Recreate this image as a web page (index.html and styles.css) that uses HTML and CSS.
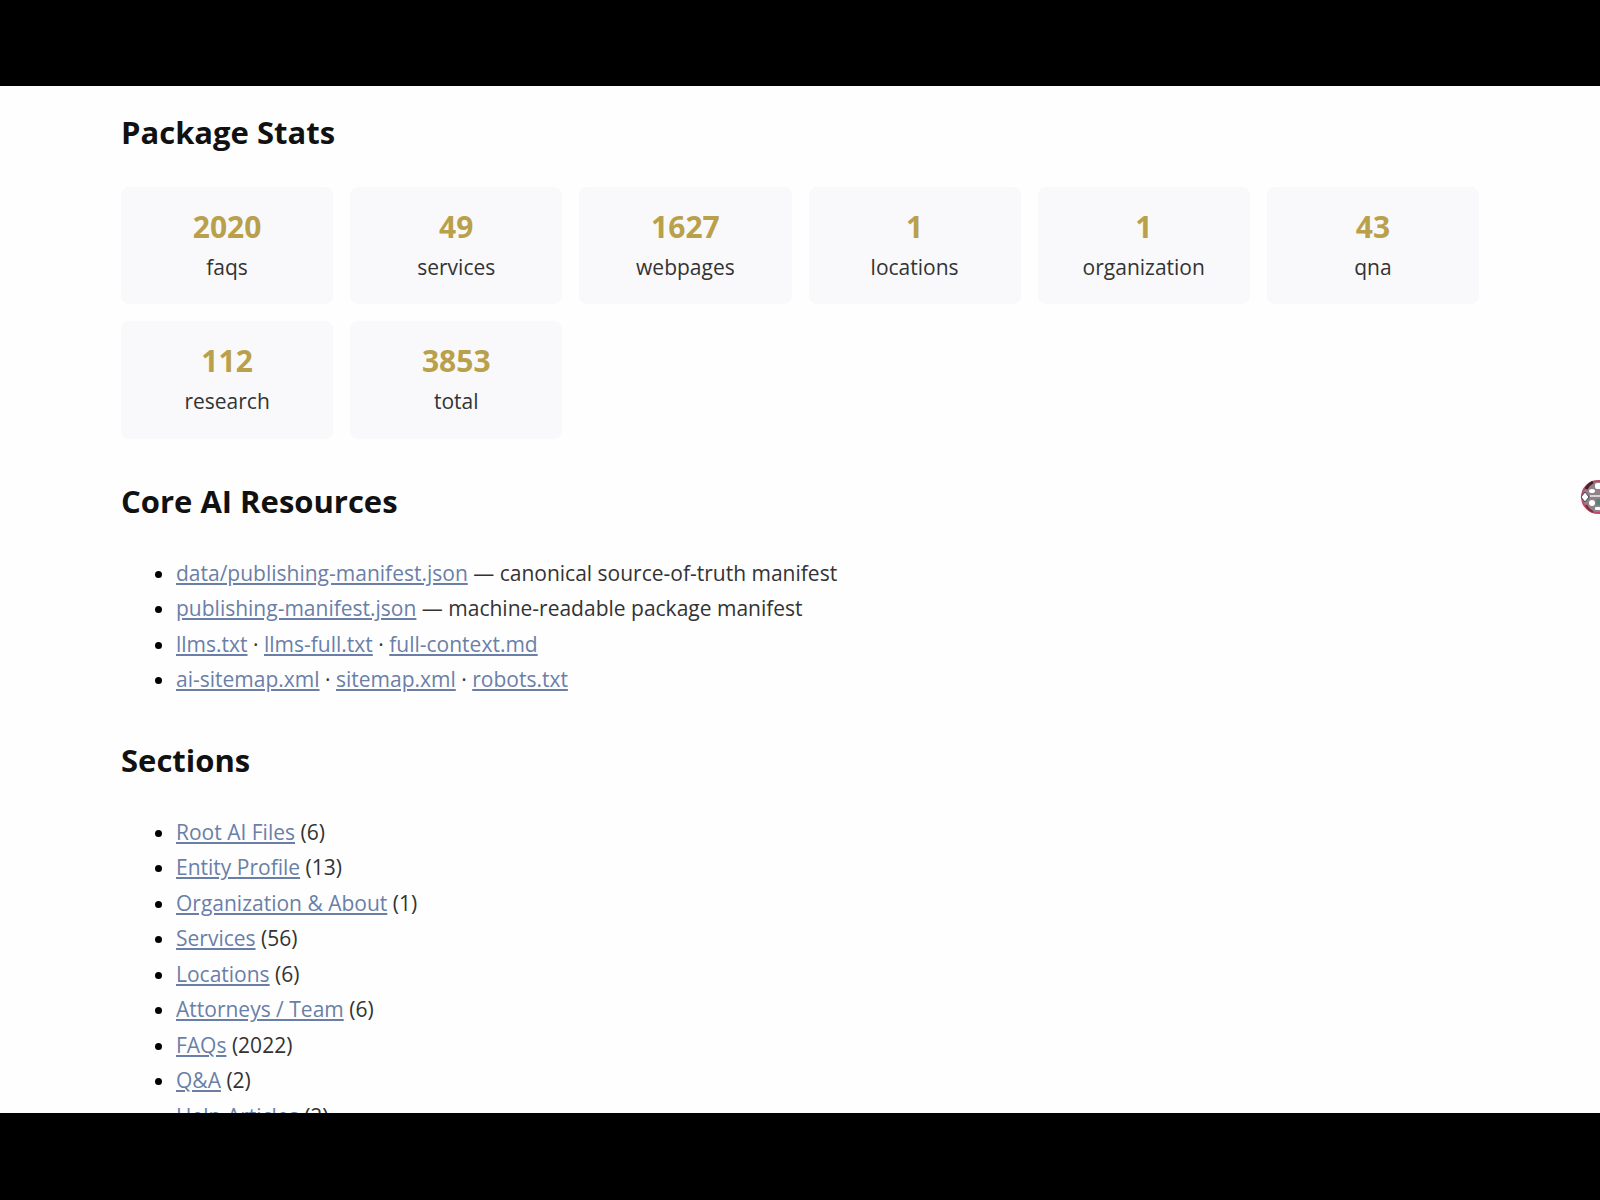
FILE: index.html
```
<!DOCTYPE html>
<html lang="en">
  <head>
    <meta charset="utf-8">
    <title>AI Package</title>
    <link rel="stylesheet" href="styles.css">
  </head>
  <body>
    <main>
      <h2>Package Stats</h2>
      <div class="stats">
        <div class="stat"><strong>2020</strong><span>faqs</span></div>
        <div class="stat"><strong>49</strong><span>services</span></div>
        <div class="stat"><strong>1627</strong><span>webpages</span></div>
        <div class="stat"><strong>1</strong><span>locations</span></div>
        <div class="stat"><strong>1</strong><span>organization</span></div>
        <div class="stat"><strong>43</strong><span>qna</span></div>
        <div class="stat"><strong>112</strong><span>research</span></div>
        <div class="stat"><strong>3853</strong><span>total</span></div>
      </div>

      <h2>Core AI Resources</h2>
      <ul>
        <li><a href="#">data/publishing-manifest.json</a> — canonical source-of-truth manifest</li>
        <li><a href="#">publishing-manifest.json</a> — machine-readable package manifest</li>
        <li><a href="#">llms.txt</a> · <a href="#">llms-full.txt</a> · <a href="#">full-context.md</a></li>
        <li><a href="#">ai-sitemap.xml</a> · <a href="#">sitemap.xml</a> · <a href="#">robots.txt</a></li>
      </ul>

      <h2>Sections</h2>
      <ul>
        <li><a href="#">Root AI Files</a> (6)</li>
        <li><a href="#">Entity Profile</a> (13)</li>
        <li><a href="#">Organization &amp; About</a> (1)</li>
        <li><a href="#">Services</a> (56)</li>
        <li><a href="#">Locations</a> (6)</li>
        <li><a href="#">Attorneys / Team</a> (6)</li>
        <li><a href="#">FAQs</a> (2022)</li>
        <li><a href="#">Q&amp;A</a> (2)</li>
        <li><a href="#">Help Articles</a> (2)</li>
      </ul>

      <!-- floating badge, half off the right edge -->
      <svg class="badge" viewBox="0 0 36 36" aria-hidden="true">
        <circle cx="18" cy="18" r="16" fill="#8f8288" stroke="#c04a66" stroke-width="2"/>
        <path d="M6 10 A16 16 0 0 1 13 3" fill="none" stroke="#4d2030" stroke-width="3"/>
        <path d="M6 26 A16 16 0 0 0 13 33" fill="none" stroke="#7d2c42" stroke-width="2"/>
        <path d="M1 18 L5 13 L9 18 L5 23 Z" fill="#fff" stroke="#54434c" stroke-width="1"/>
        <ellipse cx="12" cy="12" rx="3" ry="2" fill="#fff"/>
        <ellipse cx="12" cy="24" rx="3" ry="3" fill="#fff"/>
        <rect x="15" y="4" width="7" height="6" rx="2" fill="#fff"/>
        <rect x="15" y="28" width="7" height="3" rx="1" fill="#fff"/>
        <path d="M10 17 H22" stroke="#d9d2d5" stroke-width="2"/>
        <rect x="16" y="20" width="8" height="6" fill="#5f8177"/>
      </svg>
    </main>
  </body>
</html>
```
FILE: styles.css
```
* {
  box-sizing: border-box;
}
body {
  margin: 0;
  height: 100vh;
  padding: 86px 0 87px;
  background: #000;
  color: #333;
  font-family: "Segoe UI", "Open Sans", sans-serif;
  font-size: 21px;
  line-height: 1.69;
}
main {
  position: relative;
  height: 100%;
  padding: 20px 121px 0;
  overflow: hidden;
  background: #fefefe;
}
h2 {
  margin: 36px 0 28px;
  color: #111;
  font-size: 31px;
  line-height: 53px;
}
h2:first-child {
  margin-top: 0;
}
.stats {
  display: grid;
  grid-template-columns: repeat(auto-fill, minmax(200px, 1fr));
  gap: 17px;
}
.stat {
  padding: 17px;
  border-radius: 8px;
  background: #f9f9fb;
  text-align: center;
}
.stat strong {
  display: block;
  color: #b9a04a;
  font-size: 30px;
  line-height: 46px;
}
.stat span {
  display: block;
  padding-bottom: 2px;
}
ul {
  margin: 0;
  padding-left: 55px;
}
li::marker {
  color: #000;
}
a {
  color: #6a7fa8;
}
.badge {
  position: absolute;
  top: 393px;
  right: -16px;
  width: 36px;
  height: 36px;
}
```
